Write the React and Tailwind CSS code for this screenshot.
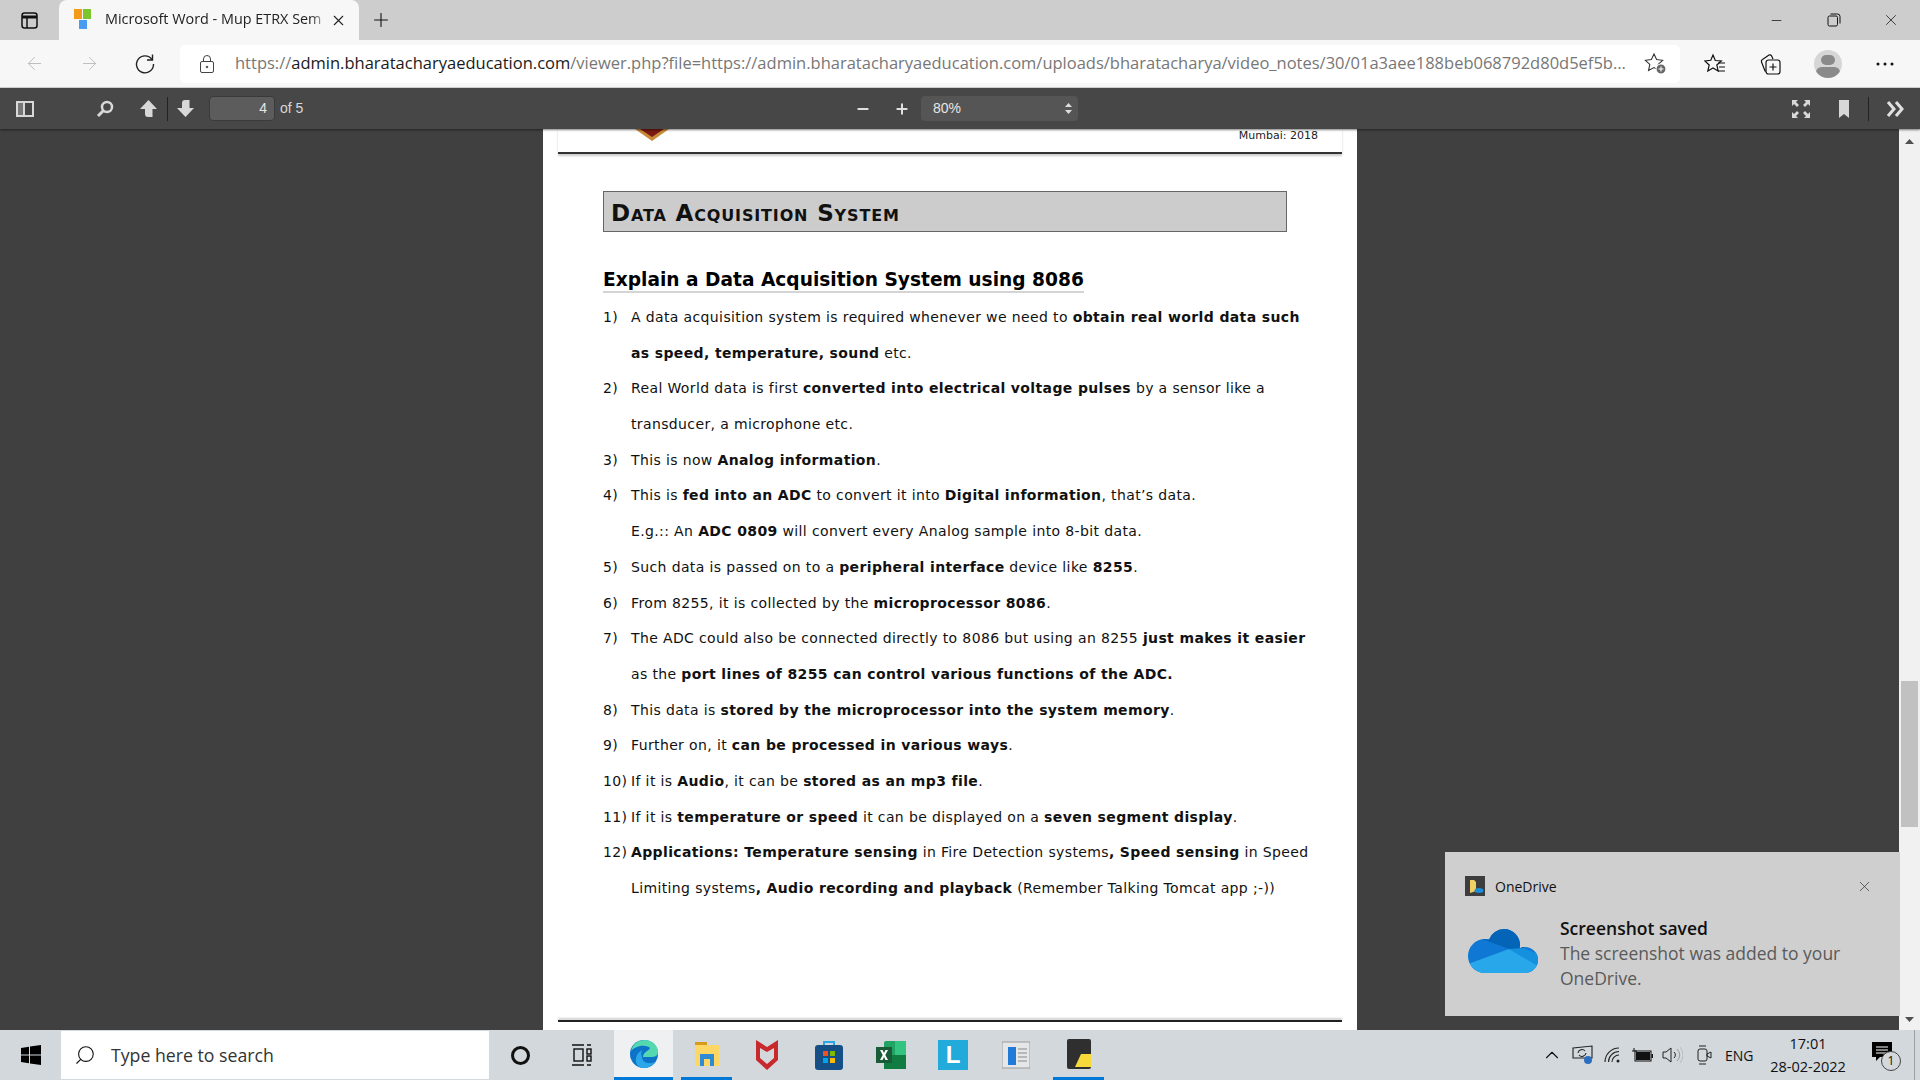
import { ArrowLeft, ArrowRight, X, Plus, Minus, Search, ChevronUp } from 'lucide-react';

const B = ({ children }) => <b className="font-bold">{children}</b>;

const rows = [
  ['1)', <>A data acquisition system is required whenever we need to <B>obtain real world data such</B></>],
  ['', <><B>as speed, temperature, sound</B> etc.</>],
  ['2)', <>Real World data is first <B>converted into electrical voltage pulses</B> by a sensor like a</>],
  ['', <>transducer, a microphone etc.</>],
  ['3)', <>This is now <B>Analog information</B>.</>],
  ['4)', <>This is <B>fed into an ADC</B> to convert it into <B>Digital information</B>, that’s data.</>],
  ['', <>E.g.:: An <B>ADC 0809</B> will convert every Analog sample into 8-bit data.</>],
  ['5)', <>Such data is passed on to a <B>peripheral interface</B> device like <B>8255</B>.</>],
  ['6)', <>From 8255, it is collected by the <B>microprocessor 8086</B>.</>],
  ['7)', <>The ADC could also be connected directly to 8086 but using an 8255 <B>just makes it easier</B></>],
  ['', <>as the <B>port lines of 8255 can control various functions of the ADC.</B></>],
  ['8)', <>This data is <B>stored by the microprocessor into the system memory</B>.</>],
  ['9)', <>Further on, it <B>can be processed in various ways</B>.</>],
  ['10)', <>If it is <B>Audio</B>, it can be <B>stored as an mp3 file</B>.</>],
  ['11)', <>If it is <B>temperature or speed</B> it can be displayed on a <B>seven segment display</B>.</>],
  ['12)', <><B>Applications: Temperature sensing</B> in Fire Detection systems<B>, Speed sensing</B> in Speed</>],
  ['', <>Limiting systems<B>, Audio recording and playback</B> (Remember Talking Tomcat app ;-))</>],
];

const TabStrip = () => (
  <div className="h-10 bg-[#cdcdcd] flex items-end shrink-0 font-['Open_Sans',sans-serif]">
    <div className="w-[59px] h-10 flex items-center justify-center">
      <svg width="17" height="17" viewBox="0 0 17 17" fill="none" stroke="#111" strokeWidth="1.5">
        <rect x="1" y="1" width="15" height="15" rx="2.5" />
        <path d="M1 5h15" strokeWidth="3" />
        <path d="M6 5v11" />
      </svg>
    </div>
    <div className="w-[300px] h-10 bg-[#f7f7f7] rounded-t-lg flex items-center pl-[15px] pr-[12px]">
      <svg width="18" height="22" viewBox="0 0 18 22" className="shrink-0">
        <rect x="0" y="0" width="8" height="10" fill="#f59a16" />
        <rect x="9" y="0" width="8" height="10" fill="#7cc52c" />
        <rect x="5" y="11" width="8" height="9" fill="#4a9cf0" />
      </svg>
      <span className="ml-[13px] flex-1 whitespace-nowrap text-[14.4px] leading-[20px] -mt-[2px] text-[#222] [mask-image:linear-gradient(to_left,transparent,black_20px)]">Microsoft Word - Mup ETRX Sem</span>
      <X size={17} strokeWidth={1.5} className="text-[#222] shrink-0" />
    </div>
    <div className="w-[43px] h-10 flex items-center justify-center">
      <Plus size={22} strokeWidth={1.2} className="text-[#111]" />
    </div>
    <div className="flex-1" />
    <div className="h-10 flex items-center text-[#111]">
      <div className="w-[57px] flex justify-center"><Minus size={15} strokeWidth={1.2} /></div>
      <div className="w-[57px] flex justify-center">
        <svg width="14" height="14" viewBox="0 0 14 14" fill="none" stroke="#111" strokeWidth="1">
          <rect x="1" y="3" width="9.5" height="10" rx="1.5" />
          <path d="M3.5 1h7A2.5 2.5 0 0 1 13 3.500v7" />
        </svg>
      </div>
      <div className="w-[58px] flex justify-center"><X size={18} strokeWidth={1} /></div>
    </div>
  </div>
);

const AddressBar = () => (
  <div className="h-12 bg-[#f7f7f7] flex items-center shrink-0 border-b border-[#d6d6d6]">
    <div className="w-[180px] flex items-center pl-[24px] shrink-0">
      <ArrowLeft size={21} strokeWidth={1.1} className="text-[#bbb]" />
      <ArrowRight size={21} strokeWidth={1.1} className="text-[#bbb] ml-[34px]" />
      <svg width="22" height="22" viewBox="0 0 22 22" fill="none" stroke="#222" strokeWidth="1.400" className="ml-[34px]">
        <path d="M18 6.500A8.500 8.500 0 1 0 19.500 11" />
        <path d="M18.500 1.500v5.500H13" />
      </svg>
    </div>
    <div className="w-[1500px] h-[38px] bg-white rounded-md flex items-center shrink-0 font-['Open_Sans',sans-serif]">
      <svg width="14" height="18" viewBox="0 0 14 18" fill="none" stroke="#444" strokeWidth="1" className="ml-[20px] shrink-0">
        <rect x="0.500" y="6.500" width="13" height="11" rx="1.500" />
        <path d="M3.500 6.500V4a3.500 3.500 0 0 1 7 0v2.500" />
        <circle cx="7" cy="12" r="0.800" fill="#444" />
      </svg>
      <span className="ml-[21px] text-[16.500px] text-[#777] whitespace-nowrap">
        https://<span className="text-[#1a1a1a]">admin.bharatacharyaeducation.com</span>/viewer.php?file=https://admin.bharatacharyaeducation.com/uploads/bharatacharya/video_notes/30/01a3aee188beb068792d80d5ef5b...
      </span>
      <div className="flex-1" />
      <svg width="24" height="24" viewBox="0 0 24 24" fill="none" stroke="#333" strokeWidth="1.100" className="mr-[12px] shrink-0">
        <path d="M10 2l2.600 5.600 6 .7-4.400 4.100 1.200 6L10 15.500 4.600 18.400l1.200-6L1.400 8.300l6-.7z" />
        <circle cx="17" cy="17" r="5" fill="#666" stroke="#fff" />
        <path d="M17 14.500v5M14.500 17h5" stroke="#fff" />
      </svg>
    </div>
    <div className="flex items-center ml-[24px]">
      <svg width="22" height="22" viewBox="0 0 22 22" fill="none" stroke="#111" strokeWidth="1.200">
        <path d="M9 2l2.300 5.500 6 .5-4.500 4 1.400 6L9 15l-5.200 3 1.400-6L.8 8l6-.7z" />
        <path d="M14 10h7M15 14h6M14 18h7" />
      </svg>
      <svg width="22" height="24" viewBox="0 0 22 24" fill="none" stroke="#111" strokeWidth="1.200" className="ml-[33px]">
        <rect x="7" y="8" width="14" height="14" rx="2.500" />
        <path d="M14 11.500v7M10.500 15h7" />
        <path d="M7 19l-1 0-3.500-9a2 2 0 0 1 1-2.500L10 3a2 2 0 0 1 2.500.8L14 7" />
      </svg>
      <div className="w-[28px] h-[28px] rounded-full bg-[#d6d6d6] overflow-hidden flex flex-col items-center ml-[33px]">
        <div className="w-[14px] h-[15px] rounded-full bg-[#8a8a8a] mt-[5px]" />
        <div className="w-[24px] h-[14px] rounded-full bg-[#8a8a8a] mt-[2px]" />
      </div>
      <svg width="18" height="4" viewBox="0 0 18 4" fill="#111" className="ml-[34px]"><circle cx="2" cy="2" r="1.500" /><circle cx="9" cy="2" r="1.500" /><circle cx="16" cy="2" r="1.500" /></svg>
    </div>
  </div>
);

const PdfToolbar = () => (
  <div className="h-[41px] bg-[#474747] flex items-center shrink-0 shadow-[0_1px_2px_rgba(0,0,0,0.5)] relative z-10 text-[#d8d8d8] font-['Liberation_Sans',sans-serif]">
    <svg width="18" height="16" viewBox="0 0 18 16" className="ml-[16px] shrink-0">
      <rect x="0" y="0" width="18" height="16" fill="#d8d8d8" />
      <rect x="2" y="2" width="5" height="12" fill="#777" />
      <rect x="9" y="2" width="7" height="12" fill="#474747" />
    </svg>
    <svg width="18" height="18" viewBox="0 0 18 18" fill="none" stroke="#d8d8d8" strokeWidth="2.500" className="ml-[62px] shrink-0">
      <circle cx="11" cy="7" r="5" />
      <path d="M7.500 10.500L2 16" strokeWidth="3" />
    </svg>
    <svg width="19" height="19" viewBox="0 0 19 19" fill="#d8d8d8" className="ml-[25px] shrink-0"><path d="M9.500 1L18 10h-4.500v8H9c-2 0-3-1-3-3v-5H1z" /></svg>
    <div className="w-px h-6 bg-[#222] ml-[9px]" />
    <svg width="19" height="19" viewBox="0 0 19 19" fill="#d8d8d8" className="ml-[8px] shrink-0"><path d="M9.500 18L18 9h-4.500V1H9C7 1 6 2 6 4v5H1z" /></svg>
    <div className="ml-[14px] w-[66px] h-[25px] bg-[#5c5c5c] border border-[#3a3a3a] rounded-sm text-right pr-[7px] text-[14px] leading-[23px] text-[#e6e6e6]">4</div>
    <span className="ml-[5px] w-[32px] text-[14px]">of 5</span>
    <Minus size={16} strokeWidth={3} className="text-[#e0e0e0] ml-[543px]" />
    <Plus size={16} strokeWidth={3} className="text-[#e0e0e0] ml-[23px]" />
    <div className="ml-[11px] w-[157px] h-[25px] bg-[#555] rounded-sm flex items-center justify-between pl-[12px] pr-[6px] text-[14px] text-[#e6e6e6]">
      <span>80%</span>
      <svg width="7" height="11" viewBox="0 0 7 11" fill="#ddd"><path d="M3.500 0L7 4H0zM3.500 11L0 7h7z" /></svg>
    </div>
    <div className="flex-1" />
    <div className="flex items-center pr-[16px]">
      <svg width="18" height="18" viewBox="0 0 18 18" fill="#d8d8d8">
        <path d="M0 0h6L4 2l3 3-2 2-3-3-2 2zM18 0v6l-2-2-3 3-2-2 3-3-2-2zM0 18v-6l2 2 3-3 2 2-3 3 2 2zM18 18h-6l2-2-3-3 2-2 3 3 2-2z" />
      </svg>
      <svg width="12" height="18" viewBox="0 0 12 18" fill="#d8d8d8" className="ml-[28px]"><path d="M1 0h10v18l-5-4-5 4z" /></svg>
      <div className="w-px h-6 bg-[#222] ml-[18px]" />
      <svg width="18" height="16" viewBox="0 0 18 16" fill="none" stroke="#e0e0e0" strokeWidth="3" className="ml-[17px]"><path d="M2 1l6 7-6 7M10 1l6 7-6 7" /></svg>
    </div>
  </div>
);

const DocPage = () => (
  <div className="w-[814px] h-full bg-white overflow-hidden shrink-0 px-[15px] text-[#111] font-['DejaVu_Sans',sans-serif]">
    <div className="h-[25px] relative flex justify-end items-start pr-[24px] border-b-2 border-[#333] shadow-[0_2px_2px_#ccc]">
      <svg width="34" height="12" viewBox="0 0 34 12" className="absolute left-[77px] top-0">
        <path d="M0 0h34L17 12z" fill="#c98a3a" />
        <path d="M5 0h24L17 8z" fill="#7a1a12" />
      </svg>
      <span className="text-[11px] leading-[14px] text-[#222]">Mumbai: 2018</span>
    </div>
    <div className="ml-[45px] mt-[37px] w-[684px] h-[41px] bg-[#cccccc] border border-[#666] flex items-center pl-[7px] pt-[3px] text-[23px] tracking-[0.85px] font-bold [font-variant:small-caps] text-[#111]">Data Acquisition System</div>
    <div className="ml-[45px] mt-[28px] h-[36px] flex items-center text-[18.600px] font-bold text-black whitespace-nowrap">
      <span className="border-b-2 border-[#d4d4d4] leading-[23px] mt-[5px]">Explain a Data Acquisition System using 8086</span>
    </div>
    <div className="ml-[45px] mt-[4px] text-[14px] tracking-[0.37px]">
      {rows.map(([n, text], i) => (
        <div key={i} className="flex whitespace-nowrap h-[35.700px] leading-[35.700px]">
          <span className="w-[28px] shrink-0">{n}</span>
          <span>{text}</span>
        </div>
      ))}
    </div>
    <div className="h-[2px] bg-[#222] mt-[113px] shadow-[0_-2px_2px_#ccc]" />
  </div>
);

const Scrollbar = () => (
  <div className="w-[21px] h-full bg-[#f1f1f1] shrink-0 flex flex-col items-center">
    <svg width="9" height="5" viewBox="0 0 9 5" fill="#505050" className="mt-[10px] shrink-0"><path d="M4.500 0L9 5H0z" /></svg>
    <div className="w-[17px] h-[146px] bg-[#c1c1c1] mt-[537px] shrink-0" />
    <div className="flex-1" />
    <svg width="9" height="5" viewBox="0 0 9 5" fill="#505050" className="mb-[8px] shrink-0"><path d="M4.500 5L0 0h9z" /></svg>
  </div>
);

const Toast = () => (
  <div className="absolute right-[20px] top-[723px] w-[455px] h-[164px] bg-[#cfcfcf] font-['Open_Sans',sans-serif] text-[#111] px-[20px] pt-[24px]">
    <div className="flex items-center h-5">
      <svg width="20" height="20" viewBox="0 0 20 20" className="shrink-0">
        <rect width="20" height="20" fill="#3d3d3d" />
        <path d="M5 4h4l2 2v9l-6 2z" fill="#f2cf63" />
        <ellipse cx="14" cy="14.500" rx="4.500" ry="2.500" fill="#1a8cd8" />
      </svg>
      <span className="ml-[10px] text-[14px]">OneDrive</span>
      <div className="flex-1" />
      <X size={17} strokeWidth={1} className="mr-[7px] text-[#333]" />
    </div>
    <div className="flex mt-[21px]">
      <svg width="70" height="46" viewBox="0 0 70 46" className="shrink-0 mt-[11px] ml-[3px]">
        <defs>
          <clipPath id="cloud">
            <circle cx="36" cy="17" r="16" />
            <circle cx="17" cy="28" r="17" />
            <circle cx="57" cy="32" r="13" />
            <rect x="14" y="28" width="44" height="17" />
          </clipPath>
        </defs>
        <g clipPath="url(#cloud)">
          <rect width="70" height="46" fill="#0f78d4" />
          <path d="M14 0h42v22L41 21 14 11z" fill="#0364b8" />
          <path d="M41 21l15-1 14 6v12z" fill="#1490df" />
          <path d="M0 36l41-15 29 17v8H0z" fill="#28a8ea" />
        </g>
      </svg>
      <div className="ml-[22px]">
        <div className="text-[17.500px] font-semibold leading-[20px] mt-[1px] text-[#111]">Screenshot saved</div>
        <div className="text-[17.500px] leading-[25px] mt-[3px] text-[#5a5a5a] w-[320px]">The screenshot was added to your OneDrive.</div>
      </div>
    </div>
  </div>
);

const Taskbar = () => (
  <div className="h-[50px] shrink-0 bg-[#d2d8dc] flex items-center relative text-[#111] font-['Open_Sans',sans-serif]">
    <div className="w-[61px] flex justify-center shrink-0">
      <svg width="20" height="20" viewBox="0 0 20 20" fill="#000"><path d="M0 3l8-1.200V9.500H0zM9 1.600L20 0v9.500H9zM0 10.500h8v7.700L0 17zM9 10.500h11V20L9 18.400z" /></svg>
    </div>
    <div className="w-[428px] h-[48px] bg-white flex items-center shrink-0">
      <Search size={22} strokeWidth={1.2} className="ml-[13px] -scale-x-100" />
      <span className="ml-[15px] text-[17.700px] text-[#333]">Type here to search</span>
    </div>
    <div className="w-[63px] flex justify-center shrink-0"><div className="w-[19px] h-[19px] rounded-full border-[3px] border-[#111]" /></div>
    <div className="w-[60px] flex justify-center shrink-0">
      <svg width="20" height="22" viewBox="0 0 20 22" fill="none" stroke="#111" strokeWidth="1.400"><path d="M0 1h12M0 21h12" /><rect x="2" y="5" width="9" height="12" /><path d="M15 1h4M15 21h4" /><rect x="15" y="5" width="4" height="5" /><rect x="15" y="12" width="4" height="5" /></svg>
    </div>
    <div className="w-[59px] ml-[2px] h-[50px] bg-[#eef0f2] flex justify-center items-center border-b-[3px] border-[#0078d7] shrink-0">
      <svg width="30" height="30" viewBox="0 0 30 30">
        <circle cx="15" cy="15" r="14" fill="#0c73c8" />
        <path d="M2 12C4 4 10 1 16 1c7 0 13 5 13 12 0 4-3 5-7 5h-8c0-5 6-6 7-9C19 6 8 5 2 12z" fill="#54d8b0" />
        <path d="M13 18c0 5 6 8 13 5-3 4-7 6-11 6-7 0-10-6-7-13 1-2 3-4 5-5-1 2-1 5 0 7z" fill="#2aa7e8" />
      </svg>
    </div>
    <div className="w-[8px] shrink-0" />
    <div className="w-[51px] h-[50px] flex justify-center items-center border-b-[3px] border-[#0078d7] shrink-0">
      <svg width="26" height="26" viewBox="0 0 26 26">
        <rect x="1" y="1" width="12" height="5" fill="#d99a1c" />
        <rect x="1" y="4" width="24" height="21" fill="#fdd765" />
        <path d="M6 25V13h14v12h-4v-7h-6v7z" fill="#2f8ad6" />
      </svg>
    </div>
    <div className="w-[4px] shrink-0" />
    <div className="w-[62px] flex justify-center shrink-0">
      <svg width="22" height="30" viewBox="0 0 22 30" fill="#c8292c"><path d="M0 0l11 7 11-7v20L11 30 0 20zM4 8v10l7 6 7-6V8l-7 4z" /></svg>
    </div>
    <div className="w-[62px] flex justify-center shrink-0">
      <svg width="28" height="30" viewBox="0 0 28 30">
        <path d="M9 5V2h10v3" fill="none" stroke="#2aa7e8" strokeWidth="2" />
        <rect x="0" y="5" width="28" height="25" rx="3" fill="#164e86" />
        <rect x="8" y="11" width="5" height="5" fill="#f25022" />
        <rect x="15" y="11" width="5" height="5" fill="#7fba00" />
        <rect x="8" y="18" width="5" height="5" fill="#00a4ef" />
        <rect x="15" y="18" width="5" height="5" fill="#ffb900" />
      </svg>
    </div>
    <div className="w-[62px] flex justify-center shrink-0">
      <svg width="30" height="30" viewBox="0 0 30 30">
        <rect x="8" y="1" width="22" height="28" rx="2" fill="#21a366" />
        <rect x="19" y="1" width="11" height="14" fill="#33c481" />
        <rect x="8" y="15" width="22" height="14" fill="#107c41" />
        <rect x="0" y="7" width="16" height="16" fill="#185c37" />
        <path d="M4 10h2.500L8 13l1.500-3H12l-2.700 5 2.700 5H9.500L8 17l-1.500 3H4l2.700-5z" fill="#fff" />
      </svg>
    </div>
    <div className="w-[62px] flex justify-center shrink-0">
      <div className="w-[30px] h-[30px] bg-[#22aadb] flex items-center justify-center text-white font-bold text-[24px] font-['Liberation_Sans',sans-serif]">L</div>
    </div>
    <div className="w-[63px] flex justify-center shrink-0">
      <svg width="28" height="28" viewBox="0 0 28 28">
        <rect x="0" y="1" width="28" height="26" fill="#e4e6e8" stroke="#9a9a9a" />
        <rect x="6" y="6" width="8" height="18" fill="#1f7ad8" />
        <path d="M16 8h9M16 12h9M16 16h9M16 20h9" stroke="#888" strokeWidth="1.200" />
      </svg>
    </div>
    <div className="w-[6px] shrink-0" />
    <div className="w-[51px] h-[50px] flex justify-center items-center border-b-[3px] border-[#0078d7] shrink-0">
      <svg width="24" height="30" viewBox="0 0 24 30">
        <rect width="24" height="30" rx="2" fill="#2f2f2f" />
        <path d="M8 28l6-13h10v13z" fill="#f8d93b" />
      </svg>
    </div>
    <div className="flex-1" />
    <div className="flex items-center h-full pr-[5px]">
      <ChevronUp size={22} strokeWidth={1.2} />
      <svg width="22" height="20" viewBox="0 0 22 20" fill="none" stroke="#222" strokeWidth="1.100" className="ml-[9px]">
        <path d="M1 3l19-2v12H1z" /><path d="M6 8a4 4 0 0 1 7-2M14 8a4 4 0 0 1-7 2" />
        <circle cx="16" cy="15" r="4" fill="#2c6fbe" stroke="none" />
      </svg>
      <svg width="18" height="16" viewBox="0 0 18 16" fill="none" stroke="#222" strokeWidth="1.100" className="ml-[10px]">
        <path d="M1 15A14 14 0 0 1 15 1M4.500 15A10.500 10.500 0 0 1 15 4.500M8 15a7 7 0 0 1 7-7" />
        <circle cx="14" cy="14" r="1.500" fill="#222" stroke="none" />
      </svg>
      <svg width="21" height="14" viewBox="0 0 21 14" className="ml-[10px]">
        <rect x="3" y="3" width="16" height="10" fill="none" stroke="#111" />
        <rect x="4" y="4" width="14" height="8" fill="#111" />
        <rect x="19.500" y="6" width="1.500" height="4" fill="#111" />
        <path d="M0 3h5M2 0v3" stroke="#111" />
      </svg>
      <svg width="21" height="18" viewBox="0 0 21 18" fill="none" stroke="#222" className="ml-[9px]"><path d="M1 6h3l5-4v14l-5-4H1z" /><path d="M12 6a4 4 0 0 1 0 6" /><path d="M15 3a8 8 0 0 1 0 12" stroke="#999" /><path d="M18 1a12 12 0 0 1 0 16" stroke="#bbb" /></svg>
      <svg width="15" height="20" viewBox="0 0 15 20" fill="none" stroke="#222" className="ml-[14px]"><rect x="1" y="4" width="9" height="12" rx="2" /><path d="M10 9l4-2v6l-4-2zM2 1h7M2 19h7" /></svg>
      <span className="ml-[13px] text-[14px] w-[34px]">ENG</span>
      <div className="ml-[1px] w-[96px] text-center text-[14.500px] leading-[23px] whitespace-nowrap">17:01<br />28-02-2022</div>
      <div className="ml-[16px] relative w-[24px] h-[26px]">
        <svg width="20" height="20" viewBox="0 0 20 20" className="absolute left-0 top-0"><path d="M0 0h20v15H8l-4 4v-4H0z" fill="#000" /><path d="M4 5h12M4 8h12M4 11h12" stroke="#fff" /></svg>
        <div className="absolute left-[9px] top-[9px] w-[20px] h-[20px] rounded-full border border-[#444] bg-[#d2d8dc] text-[12px] leading-[18px] text-center">1</div>
      </div>
      <div className="w-px h-[50px] bg-[#9aa0a4] ml-[18px]" />
    </div>
  </div>
);

const App = () => (
  <div className="w-[1920px] h-[1080px] overflow-hidden flex flex-col">
    <TabStrip />
    <AddressBar />
    <PdfToolbar />
    <div className="flex-1 min-h-0 bg-[#404040] flex relative">
      <div className="flex-1 min-w-0 flex justify-center pl-px">
        <DocPage />
      </div>
      <Scrollbar />
      <Toast />
    </div>
    <Taskbar />
  </div>
);

export default App;
